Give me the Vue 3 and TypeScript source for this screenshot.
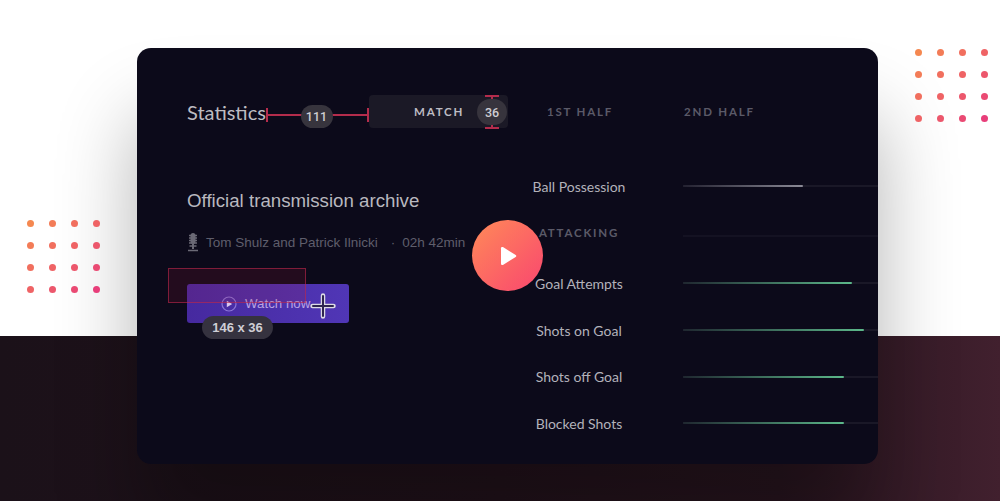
<template>
  <div class="page">
    <div class="dots dots-left">
      <i v-for="(c, i) in dotColors" :key="i" :style="{ background: c }"></i>
    </div>
    <div class="dots dots-right">
      <i v-for="(c, i) in dotColors" :key="i" :style="{ background: c }"></i>
    </div>

    <div class="card">
      <div class="header">
        <h2 class="heading">Statistics</h2>
        <div class="tabs">
          <span class="tab active">MATCH</span>
          <span class="tab">1ST HALF</span>
          <span class="tab">2ND HALF</span>
        </div>
      </div>

      <div class="body">
        <div class="left">
          <h3 class="title">Official transmission archive</h3>
          <div class="meta">
            <svg class="mic" width="12" height="21" viewBox="0 0 12 21" fill="none">
              <rect x="3.500" y="1" width="5" height="11" rx="2.500" fill="#6b6a76" />
              <path d="M2 3.500h8M2 6h8M2 8.500h8M2 11h8" stroke="#6b6a76" stroke-width="1.300" />
              <path d="M6 12v5" stroke="#6b6a76" stroke-width="2" />
              <path d="M2.500 14h7M1 18.500h10" stroke="#6b6a76" stroke-width="1.600" />
            </svg>
            <span>Tom Shulz and Patrick Ilnicki</span>
            <span class="sep">·</span>
            <span>02h 42min</span>
          </div>
          <button class="watch">
            <svg width="16" height="16" viewBox="0 0 16 16" fill="none">
              <circle cx="8" cy="8" r="7" stroke="#8b74d6" stroke-width="1.200" />
              <path d="M5.800 4.800 11.200 8l-5.400 3.200z" fill="#d9c8f0" />
            </svg>
            Watch now
          </button>
        </div>

        <div class="stats">
          <div v-for="s in stats" :key="s.label" class="stat" :class="{ group: s.group }">
            <span class="stat-label">{{ s.label }}</span>
            <div class="track">
              <div class="fill" :class="s.kind" :style="{ width: s.width + 'px' }"></div>
            </div>
          </div>
        </div>
      </div>

      <!-- redline measurements drawn over the card -->
      <div class="measure-h">
        <span class="pill">111</span>
      </div>
      <div class="measure-v">
        <span class="pill round">36</span>
      </div>
      <div class="selection"></div>
      <span class="size-pill">146 x 36</span>
      <svg class="cursor" width="26" height="26" viewBox="0 0 26 26" fill="none">
        <path d="M13 2.500v21M2.500 13h21" stroke="#dcdae4" stroke-width="4.500" stroke-linecap="round" />
        <path d="M13 3v20M3 13h20" stroke="#2e2550" stroke-width="2" stroke-linecap="round" />
      </svg>
      <div class="play">
        <svg width="20" height="22" viewBox="0 0 20 22">
          <path d="M3 3.200v15.600c0 1 1 1.600 1.900 1.100l12.800-7.800c.8-.5.8-1.700 0-2.200L4.900 2.100C4 1.600 3 2.200 3 3.200z" fill="#fff" />
        </svg>
      </div>
    </div>
  </div>
</template>

<script setup lang="ts">
interface Stat {
  label: string
  width: number
  kind: string
  group?: boolean
}

const stats: Stat[] = [
  { label: 'Ball Possession', width: 120, kind: 'grey' },
  { label: 'ATTACKING', width: 0, kind: 'grey', group: true },
  { label: 'Goal Attempts', width: 169, kind: 'green' },
  { label: 'Shots on Goal', width: 181, kind: 'green' },
  { label: 'Shots off Goal', width: 161, kind: 'green' },
  { label: 'Blocked Shots', width: 161, kind: 'green' },
]

// orange top left to pink bottom right
function mix(t: number) {
  const a = [245, 136, 80]
  const b = [232, 62, 122]
  return `rgb(${a.map((v, i) => Math.round(v + (b[i] - v) * t)).join(',')})`
}

const dotColors: string[] = []
for (let r = 0; r < 4; r++) {
  for (let c = 0; c < 4; c++) dotColors.push(mix((r + c) / 6))
}
</script>

<style>
html,
body {
  margin: 0;
  background: #fff;
}
</style>

<style scoped>
.page {
  position: relative;
  width: 1000px;
  height: 501px;
  overflow: hidden;
  padding: 48px 0 0 137px;
  box-sizing: border-box;
  background:
    linear-gradient(90deg, #1b1119 0%, #22121b 50%, #28151f 78%, #41202e 100%) left bottom / 100% 165px no-repeat,
    #fff;
  font-family: "Lato", "Liberation Sans", sans-serif;
}

.dots {
  position: absolute;
  display: grid;
  grid-template-columns: repeat(4, 7px);
  grid-auto-rows: 7px;
  gap: 15.300px;
}
.dots i {
  border-radius: 50%;
}
.dots-left {
  left: 26.500px;
  top: 219.500px;
}
.dots-right {
  left: 914.500px;
  top: 48.500px;
}

.page::before {
  content: "";
  position: absolute;
  left: 137px;
  top: 48px;
  width: 741px;
  height: 416px;
  border-radius: 14px;
  box-shadow: 0 70px 80px rgba(0, 0, 0, 0.3);
}
.card {
  position: relative;
  width: 741px;
  height: 416px;
  padding: 47px 0 0 50px;
  box-sizing: border-box;
  overflow: hidden;
  background: #0c0a1a;
  border-radius: 14px;
}

.header {
  display: flex;
  align-items: center;
  height: 33px;
}
.heading {
  width: 182px;
  margin: 0;
  font-size: 20px;
  font-weight: 400;
  color: #bdbcc2;
}
.tabs {
  display: flex;
  height: 100%;
}
.tab {
  display: flex;
  align-items: center;
  width: 98px;
  padding-left: 39px;
  font-size: 11.500px;
  font-weight: 700;
  letter-spacing: 1.800px;
  color: #5b5a68;
}
.tab.active {
  width: 94px;
  padding-left: 45px;
  color: #bdbcc3;
  background: #1b1926;
  border-radius: 4px;
}

.body {
  display: flex;
  margin-top: 36px;
}
.left {
  width: 323px;
  padding-top: 25px;
}
.title {
  margin: 0;
  font-family: "Liberation Sans", sans-serif;
  font-size: 18.700px;
  line-height: 24px;
  font-weight: 400;
  color: #b9b8bf;
}
.meta {
  display: flex;
  align-items: center;
  height: 20px;
  margin-top: 19px;
  font-family: "Liberation Sans", sans-serif;
  font-size: 13.500px;
  color: #5f5e6c;
}
.mic {
  margin-right: 7px;
}
.sep {
  margin: 0 7px 0 13px;
}
.watch {
  display: flex;
  align-items: center;
  gap: 8px;
  width: 162px;
  height: 39px;
  margin-top: 32px;
  padding: 0 0 0 34px;
  border: none;
  border-radius: 3px;
  background: linear-gradient(90deg, #46299f, #5036b6);
  font-family: "Liberation Sans", sans-serif;
  font-size: 13.300px;
  color: #b9a3e2;
}

.stats {
  flex: 1;
}
.stat {
  display: flex;
  align-items: center;
  height: 46.700px;
}
.stat.group {
  margin-bottom: 3.600px;
}
.stat-label {
  width: 138px;
  margin-right: 35px;
  margin-bottom: 2px;
  text-align: center;
  font-size: 14px;
  color: #b3b2ba;
}
.group .stat-label {
  margin-bottom: 4px;
  font-size: 11.500px;
  font-weight: 700;
  letter-spacing: 1.800px;
  color: #5b5a68;
}
.track {
  flex: 1;
  height: 2px;
  margin-top: -2px;
  background: rgba(255, 255, 255, 0.06);
}
.group .track {
  margin-top: 3px;
  background: rgba(255, 255, 255, 0.035);
}
.fill {
  height: 100%;
  border-radius: 1px;
}
.fill.grey {
  background: linear-gradient(90deg, rgba(120, 118, 135, 0.1), #8b8a96);
}
.fill.green {
  background: linear-gradient(90deg, rgba(80, 170, 125, 0.1), #5cb88a);
}

.measure-h {
  position: absolute;
  left: 129px;
  top: 60px;
  width: 103px;
  height: 14px;
  display: flex;
  align-items: center;
  justify-content: center;
  border-left: 2px solid #b42c4c;
  border-right: 2px solid #b42c4c;
  box-sizing: border-box;
  background: linear-gradient(#b42c4c, #b42c4c) center / 100% 2px no-repeat;
}
.measure-v {
  position: absolute;
  left: 348px;
  top: 47px;
  width: 14px;
  height: 34px;
  display: flex;
  align-items: center;
  justify-content: center;
  border-top: 2px solid #b42c4c;
  border-bottom: 2px solid #b42c4c;
  box-sizing: border-box;
  background: linear-gradient(#b42c4c, #b42c4c) center / 2px 100% no-repeat;
}
.pill {
  flex: none;
  display: flex;
  align-items: center;
  justify-content: center;
  width: 32px;
  height: 23px;
  margin: 2px 2px 0 0;
  border-radius: 12px;
  background: #37343d;
  font-family: "Roboto", sans-serif;
  font-size: 12.500px;
  font-weight: 500;
  color: #cfced3;
}
.pill.round {
  width: 30px;
  height: 26px;
  margin: 0;
  border-radius: 13px;
}
.selection {
  position: absolute;
  left: 31px;
  top: 220px;
  width: 138px;
  height: 35px;
  box-sizing: border-box;
  border: 1.500px solid rgba(190, 40, 75, 0.6);
  background: rgba(170, 25, 55, 0.15);
}
.size-pill {
  position: absolute;
  left: 65px;
  top: 268px;
  width: 71px;
  height: 23px;
  border-radius: 12px;
  background: #35323f;
  text-align: center;
  font-family: "Liberation Sans", sans-serif;
  font-size: 13px;
  line-height: 23px;
  font-weight: 700;
  color: #cfced5;
}
.cursor {
  position: absolute;
  left: 173px;
  top: 245px;
}
.play {
  position: absolute;
  left: 335px;
  top: 172px;
  width: 71px;
  height: 71px;
  display: flex;
  align-items: center;
  justify-content: center;
  border-radius: 50%;
  background: linear-gradient(135deg, #ff8a58, #f9466f);
}
</style>
